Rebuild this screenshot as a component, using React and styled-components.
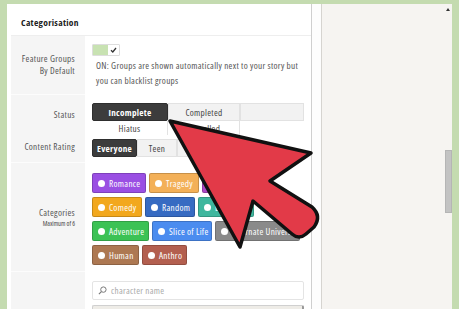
import React from 'react';
import styled, { createGlobalStyle } from 'styled-components';

const GlobalStyle = createGlobalStyle`
  html, body {
    margin: 0;
    padding: 0;
    width: 459px;
    height: 309px;
    overflow: hidden;
    background: #c4dbb0;
  }
  * { box-sizing: border-box; }
`;

const Frame = styled.div`
  position: relative;
  display: flex;
  height: 309px;
  padding: 4px 7px 0 7px;
  font-family: 'Open Sans', 'Noto Sans', sans-serif;
  font-stretch: 75%;
  letter-spacing: 0.3px;
  color: #444;
`;

const MainPanel = styled.div`
  width: 305px;
  background: #fff;
  border-right: 1px solid #cfcfcf;
  padding-left: 4px;
  display: flex;
  flex-direction: column;
  overflow: hidden;
`;

const Gutter = styled.div`
  width: 10px;
  background: #fdfdfd;
  border-right: 1px solid #d6d4d0;
`;

const Sidebar = styled.div`
  flex: 1;
  background: #f6f4f1;
  display: flex;
  justify-content: flex-end;
`;

const ScrollTrack = styled.div`
  width: 8px;
  display: flex;
  flex-direction: column;
  align-items: center;
  padding-top: 4px;
`;

const ScrollArrow = styled.div`
  width: 0;
  height: 0;
  border-left: 2px solid transparent;
  border-right: 2px solid transparent;
  border-bottom: 3px solid #333;
`;

const ScrollThumb = styled.div`
  margin-top: 139px;
  width: 7px;
  height: 63px;
  background: #c3c3c3;
  border: 1px solid #b5b5b5;
`;

const Header = styled.div`
  flex: none;
  height: 32px;
  display: flex;
  align-items: center;
  padding: 5px 0 0 10px;
  font-size: 9.5px;
  font-weight: 700;
  color: #222;
  border-bottom: 1px solid #eee;
`;

const Row = styled.div`
  flex: none;
  display: grid;
  grid-template-columns: 74px 1fr;
  height: ${(p) => p.$h}px;
`;

const Label = styled.div`
  background: #f5f5f5;
  border-bottom: 1px solid #fcfcfc;
  display: flex;
  flex-direction: column;
  justify-content: center;
  align-items: flex-end;
  padding-right: 10px;
  text-align: right;
  white-space: nowrap;
  font-size: 9.2px;
  line-height: 12px;
  color: #555;
`;

const SmallNote = styled.span`
  font-size: 6.5px;
  line-height: 9px;
  letter-spacing: 0;
  color: #444;
`;

const Content = styled.div`
  padding: ${(p) => p.$pt}px 8px 0 7px;
  display: flex;
  flex-direction: column;
  align-items: flex-start;
`;

const Toggle = styled.div`
  display: flex;
  width: 28px;
  height: 12px;
  border: 1px solid #ddd;
  border-radius: 1px;
  overflow: hidden;
`;

const ToggleOn = styled.div`
  width: 15px;
  background: #c8e2b2;
`;

const ToggleCheck = styled.div`
  flex: 1;
  background: #fff;
  display: flex;
  align-items: center;
  justify-content: center;
`;

const Help = styled.p`
  margin: 2px 0 0 4px;
  font-size: 9.2px;
  line-height: 15px;
  color: #555;
  white-space: nowrap;
`;

const ButtonGrid = styled.div`
  display: grid;
  grid-template-columns: ${(p) => p.$cols};
  width: ${(p) => p.$w}px;
`;

const Choice = styled.div`
  height: ${(p) => (p.$low ? 14 : 18)}px;
  display: flex;
  align-items: center;
  justify-content: center;
  font-size: 9.2px;
  font-weight: ${(p) => (p.$active ? 700 : 400)};
  color: ${(p) => (p.$active ? '#fff' : '#444')};
  background: ${(p) => (p.$active ? '#3c3c3c' : p.$low ? '#fff' : '#f2f2f2')};
  border: 1px solid ${(p) => (p.$active ? '#2e2e2e' : '#e2e2e2')};
  border-top: ${(p) => (p.$low ? 'none' : undefined)};
  border-bottom: ${(p) => (p.$low ? 'none' : undefined)};
  border-left: ${(p) => (p.$low ? 'none' : undefined)};
  border-radius: ${(p) => (p.$active ? '2px' : '0')};
`;

const TagBlock = styled.div`
  display: flex;
  flex-direction: column;
  gap: 4px;
`;

const TagRow = styled.div`
  display: flex;
  gap: 3px;
`;

const Tag = styled.div`
  height: 20px;
  width: ${(p) => p.$w}px;
  display: flex;
  align-items: center;
  gap: 4px;
  padding-left: 5px;
  background: ${(p) => p.$bg};
  border: 1px solid rgba(0, 0, 0, 0.18);
  border-radius: 2px;
  color: #fff;
  font-size: 9.2px;
  white-space: nowrap;
  overflow: hidden;
`;

const Dot = styled.span`
  flex: none;
  width: 7px;
  height: 7px;
  border-radius: 50%;
  background: #fff;
`;

const Search = styled.div`
  width: 212px;
  height: 19px;
  border: 1px solid #e4e4e4;
  border-radius: 2px;
  display: flex;
  align-items: center;
  gap: 4px;
  padding-left: 5px;
  font-size: 9.2px;
  color: #aaa;
  background: #fff;
`;

const NextBox = styled.div`
  margin-top: 5px;
  width: 212px;
  height: 20px;
  background: #eeece7;
  border: 1px solid #d0d0d0;
  border-right: 2px solid #999;
  border-radius: 2px;
`;

const ArrowLayer = styled.svg`
  position: absolute;
  left: 0;
  top: 0;
  pointer-events: none;
`;

const tags = [
  [
    { name: 'Romance', bg: '#9a4fe3', w: 54 },
    { name: 'Tragedy', bg: '#f3b058', w: 50 },
    { name: 'Sci-Fi', bg: '#ad4ac6', w: 50 },
  ],
  [
    { name: 'Comedy', bg: '#f2a81e', w: 50 },
    { name: 'Random', bg: '#376bc2', w: 50 },
    { name: 'Dark', bg: '#3fb79e', w: 56 },
  ],
  [
    { name: 'Adventure', bg: '#3cc255', w: 57 },
    { name: 'Slice of Life', bg: '#4b8cef', w: 60 },
    { name: 'Alternate Universe', bg: '#8a8a8a', w: 85 },
  ],
  [
    { name: 'Human', bg: '#ad7852', w: 47 },
    { name: 'Anthro', bg: '#b35f4f', w: 45 },
  ],
];

export default function App() {
  return (
    <>
      <GlobalStyle />
      <Frame>
        <MainPanel>
          <Header>Categorisation</Header>

          <Row $h={59}>
            <Label>
              <span>Feature Groups</span>
              <span>By Default</span>
            </Label>
            <Content $pt={8}>
              <Toggle>
                <ToggleOn />
                <ToggleCheck>
                  <svg width="7" height="6" viewBox="0 0 7 6">
                    <path d="M1 3.2 L2.8 5 L6 1" stroke="#333" strokeWidth="1.3" fill="none" />
                  </svg>
                </ToggleCheck>
              </Toggle>
              <Help>
                ON: Groups are shown automatically next to your story but
                <br />
                you can blacklist groups
              </Help>
            </Content>
          </Row>

          <Row $h={36}>
            <Label>Status</Label>
            <Content $pt={8}>
              <ButtonGrid $cols="76px 72px 64px" $w={212}>
                <Choice $active>Incomplete</Choice>
                <Choice>Completed</Choice>
                <Choice />
                <Choice $low>Hiatus</Choice>
                <Choice $low>Cancelled</Choice>
              </ButtonGrid>
            </Content>
          </Row>

          <Row $h={32}>
            <Label>Content Rating</Label>
            <Content $pt={8}>
              <ButtonGrid $cols="45px 40px 44px" $w={129}>
                <Choice $active>Everyone</Choice>
                <Choice>Teen</Choice>
                <Choice>Mature</Choice>
              </ButtonGrid>
            </Content>
          </Row>

          <Row $h={109}>
            <Label>
              <span>Categories</span>
              <SmallNote>Maximum of 6</SmallNote>
            </Label>
            <Content $pt={10}>
              <TagBlock>
                {tags.map((row, i) => (
                  <TagRow key={i}>
                    {row.map((t) => (
                      <Tag key={t.name} $bg={t.bg} $w={t.w}>
                        <Dot />
                        {t.name}
                      </Tag>
                    ))}
                  </TagRow>
                ))}
              </TagBlock>
            </Content>
          </Row>

          <Row $h={60}>
            <Label />
            <Content $pt={9}>
              <Search>
                <svg width="9" height="9" viewBox="0 0 10 10">
                  <circle cx="6" cy="4" r="3" stroke="#777" strokeWidth="1.1" fill="none" />
                  <path d="M3.8 6.2 L1 9" stroke="#777" strokeWidth="1.3" />
                </svg>
                character name
              </Search>
              <NextBox />
            </Content>
          </Row>
        </MainPanel>
        <Gutter />
        <Sidebar>
          <ScrollTrack>
            <ScrollArrow />
            <ScrollThumb />
          </ScrollTrack>
        </Sidebar>

        <ArrowLayer width="459" height="309" viewBox="0 0 459 309">
          <path
            d="M170 121 L311 153 L270 181 L312 207 Q322 216 314 227 L306 234 Q299 240 292 234 L253 201 L240 247 Z"
            fill="#e23a48"
            stroke="#111"
            strokeWidth="3.5"
            strokeLinejoin="round"
          />
        </ArrowLayer>
      </Frame>
    </>
  );
}
